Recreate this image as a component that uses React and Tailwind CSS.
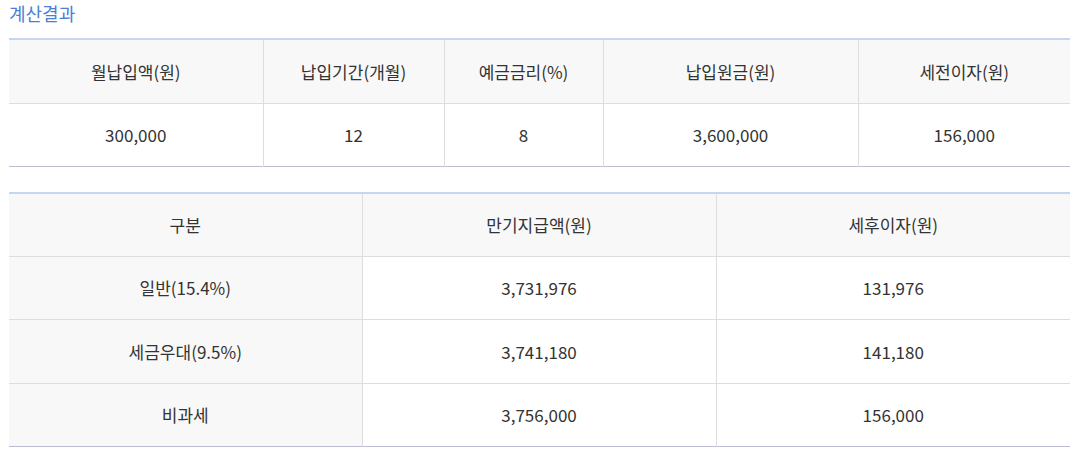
const summary = {
  heads: ['월납입액(원)', '납입기간(개월)', '예금금리(%)', '납입원금(원)', '세전이자(원)'],
  values: ['300,000', '12', '8', '3,600,000', '156,000'],
  widths: ['w-[254px]', 'w-[181px]', 'w-[159px]', 'w-[255px]', ''],
}

const rows = [
  { label: '일반(15.4%)', total: '3,731,976', interest: '131,976' },
  { label: '세금우대(9.5%)', total: '3,741,180', interest: '141,180' },
  { label: '비과세', total: '3,756,000', interest: '156,000' },
]

function App() {
  return (
    <div
      className="w-[1078px] h-[452px] bg-white pl-[9px] pr-[8px] text-[17px] text-[#333]"
      style={{ fontFamily: '"Noto Sans CJK KR", "Noto Sans", sans-serif' }}
    >
      <h3 className="h-[38px] pt-[1px] text-[18px] leading-[24px] font-normal text-[#4a7fd6]">
        계산결과
      </h3>

      <table className="w-full table-fixed border-collapse border-t-2 border-t-[#c5d7f0] border-b border-b-[#b9bdcf] text-center">
        <thead>
          <tr className="h-[64px] bg-[#f8f8f8]">
            {summary.heads.map((h, i) => (
              <th
                key={h}
                className={`${summary.widths[i]} font-normal border-l border-[#dddddd] first:border-l-0`}
              >
                {h}
              </th>
            ))}
          </tr>
        </thead>
        <tbody>
          <tr className="h-[63px] border-t border-[#dddddd]">
            {summary.values.map((v, i) => (
              <td key={i} className="border-l border-[#dddddd] first:border-l-0">
                {v}
              </td>
            ))}
          </tr>
        </tbody>
      </table>

      <table className="mt-[25px] w-full table-fixed border-collapse border-t-2 border-t-[#c5d7f0] border-b border-b-[#b9bdcf] text-center">
        <thead>
          <tr className="h-[64px] bg-[#f8f8f8]">
            <th className="w-[353px] font-normal">구분</th>
            <th className="w-[354px] font-normal border-l border-[#dddddd]">만기지급액(원)</th>
            <th className="font-normal border-l border-[#dddddd]">세후이자(원)</th>
          </tr>
        </thead>
        <tbody>
          {rows.map((r, i) => (
            <tr key={r.label} className={`${i === 1 ? 'h-[64px]' : 'h-[63px]'} border-t border-[#dddddd]`}>
              <td className="bg-[#f8f8f8]">{r.label}</td>
              <td className="border-l border-[#dddddd]">{r.total}</td>
              <td className="border-l border-[#dddddd]">{r.interest}</td>
            </tr>
          ))}
        </tbody>
      </table>
    </div>
  )
}

export default App
